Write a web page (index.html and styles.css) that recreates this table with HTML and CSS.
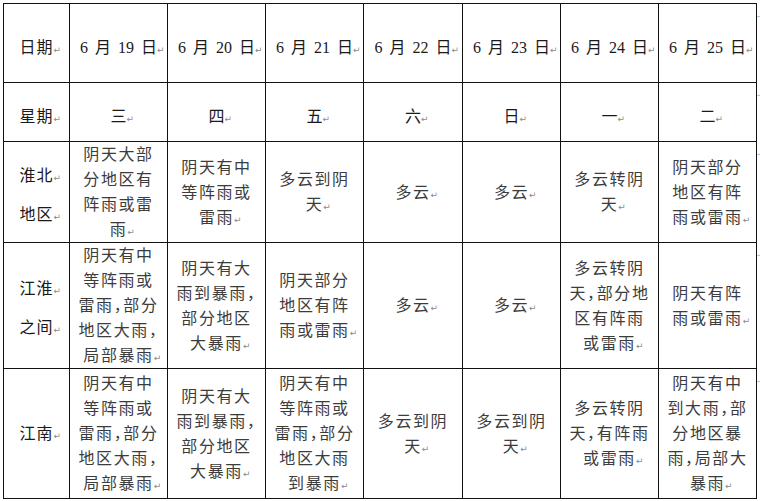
FILE: index.html
```html
<!DOCTYPE html>
<html lang="zh-CN">
<head>
<meta charset="utf-8">
<title>天气预报</title>
<link rel="stylesheet" href="styles.css">
</head>
<body>
<table class="grid">
  <colgroup>
    <col class="c-label"><col class="c-day"><col class="c-day"><col class="c-day"><col class="c-day5"><col class="c-day"><col class="c-day"><col class="c-day"><col class="c-eol">
  </colgroup>
  <tr class="r-date">
    <td class="label">日期<span class="pm">↵</span></td>
    <td class="head">6 月 19 日<span class="pm">↵</span></td>
    <td class="head">6 月 20 日<span class="pm">↵</span></td>
    <td class="head">6 月 21 日<span class="pm">↵</span></td>
    <td class="head">6 月 22 日<span class="pm">↵</span></td>
    <td class="head">6 月 23 日<span class="pm">↵</span></td>
    <td class="head">6 月 24 日<span class="pm">↵</span></td>
    <td class="head">6 月 25 日<span class="pm">↵</span></td>
    <td class="eol">↵</td>
  </tr>
  <tr class="r-week">
    <td class="label">星期<span class="pm">↵</span></td>
    <td class="head">三<span class="pm">↵</span></td>
    <td class="head">四<span class="pm">↵</span></td>
    <td class="head">五<span class="pm">↵</span></td>
    <td class="head">六<span class="pm">↵</span></td>
    <td class="head">日<span class="pm">↵</span></td>
    <td class="head">一<span class="pm">↵</span></td>
    <td class="head">二<span class="pm">↵</span></td>
    <td class="eol">↵</td>
  </tr>
  <tr class="r-huaibei">
    <td class="label two">淮北<span class="pm">↵</span><br>地区<span class="pm">↵</span></td>
    <td>阴天大部<br>分地区有<br>阵雨或雷<br>雨<span class="pm">↵</span></td>
    <td>阴天有中<br>等阵雨或<br>雷雨<span class="pm">↵</span></td>
    <td>多云到阴<br>天<span class="pm">↵</span></td>
    <td>多云<span class="pm">↵</span></td>
    <td>多云<span class="pm">↵</span></td>
    <td>多云转阴<br>天<span class="pm">↵</span></td>
    <td>阴天部分<br>地区有阵<br>雨或雷雨<span class="pm">↵</span></td>
    <td class="eol">↵</td>
  </tr>
  <tr class="r-jianghuai">
    <td class="label two">江淮<span class="pm">↵</span><br>之间<span class="pm">↵</span></td>
    <td>阴天有中<br>等阵雨或<br>雷雨，部分<br>地区大雨，<br>局部暴雨<span class="pm">↵</span></td>
    <td>阴天有大<br>雨到暴雨，<br>部分地区<br>大暴雨<span class="pm">↵</span></td>
    <td>阴天部分<br>地区有阵<br>雨或雷雨<span class="pm">↵</span></td>
    <td>多云<span class="pm">↵</span></td>
    <td>多云<span class="pm">↵</span></td>
    <td>多云转阴<br>天，部分地<br>区有阵雨<br>或雷雨<span class="pm">↵</span></td>
    <td>阴天有阵<br>雨或雷雨<span class="pm">↵</span></td>
    <td class="eol">↵</td>
  </tr>
  <tr class="r-jiangnan">
    <td class="label">江南<span class="pm">↵</span></td>
    <td>阴天有中<br>等阵雨或<br>雷雨，部分<br>地区大雨，<br>局部暴雨<span class="pm">↵</span></td>
    <td>阴天有大<br>雨到暴雨，<br>部分地区<br>大暴雨<span class="pm">↵</span></td>
    <td>阴天有中<br>等阵雨或<br>雷雨，部分<br>地区大雨<br>到暴雨<span class="pm">↵</span></td>
    <td>多云到阴<br>天<span class="pm">↵</span></td>
    <td>多云到阴<br>天<span class="pm">↵</span></td>
    <td>多云转阴<br>天，有阵雨<br>或雷雨<span class="pm">↵</span></td>
    <td>阴天有中<br>到大雨，部<br>分地区暴<br>雨，局部大<br>暴雨<span class="pm">↵</span></td>
    <td class="eol">↵</td>
  </tr>
</table>
</body>
</html>
```
FILE: styles.css
```css
html, body {
  margin: 0;
  background: #ffffff;
}
body {
  padding: 3px 0 0 3px;
  overflow: hidden;
}
.grid {
  border-collapse: collapse;
  table-layout: fixed;
  width: 757px;
}
.c-label { width: 66px; }
.c-day { width: 98px; }
.c-day5 { width: 99px; }
.c-eol { width: 4px; }

.grid td {
  border: 1px solid #111;
  padding: 0;
  text-align: center;
  vertical-align: middle;
  font-family: "Liberation Serif", "Noto Sans CJK SC", serif;
  font-size: 16px;
  line-height: 25px;
  letter-spacing: 1.6px;
  color: #3c3c3c;
  font-feature-settings: "halt";
  white-space: nowrap;
}
.grid td.label {
  color: #1a1a1a;
  letter-spacing: 1px;
}
.grid td.two {
  line-height: 39px;
  padding-top: 5px;
}
.grid td.head {
  color: #1a1a1a;
  letter-spacing: 0;
  word-spacing: 3px;
}
.r-date { height: 79px; }
.r-week { height: 59px; }
.r-huaibei { height: 100px; }
.r-jianghuai { height: 124px; }
.r-jiangnan { height: 130px; }
.r-date td, .r-week td { padding-top: 9px; }

.pm {
  display: inline-block;
  width: 0;
  overflow: visible;
  font-family: "DejaVu Sans", sans-serif;
  font-size: 9px;
  line-height: 1;
  letter-spacing: 0;
  word-spacing: 0;
  color: #8a8a8a;
  vertical-align: baseline;
}
.grid td.eol {
  border: none;
  vertical-align: top;
  text-align: left;
  padding-top: 11px;
  font-family: "DejaVu Sans", sans-serif;
  font-size: 4px;
  line-height: 1;
  letter-spacing: 0;
  color: #9a9a9a;
}
```
